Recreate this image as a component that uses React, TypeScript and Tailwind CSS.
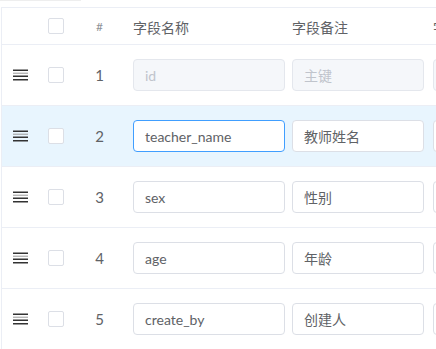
import React from 'react';

interface FieldRow {
  id: number;
  name: string;
  remark: string;
  disabled?: boolean;
  active?: boolean;
}

const ROWS: FieldRow[] = [
  { id: 1, name: 'id', remark: '主键', disabled: true },
  { id: 2, name: 'teacher_name', remark: '教师姓名', active: true },
  { id: 3, name: 'sex', remark: '性别' },
  { id: 4, name: 'age', remark: '年龄' },
  { id: 5, name: 'create_by', remark: '创建人' },
];

const FONT = "font-['Lato','Noto_Sans_CJK_SC',sans-serif]";

function DragHandle() {
  return (
    <svg width="15" height="12" viewBox="0 0 15 12">
      <rect x="0" y="0.5" width="15" height="1.5" fill="#333" />
      <rect x="0" y="3.7" width="15" height="1" fill="#999" />
      <rect x="0" y="6.5" width="15" height="1.5" fill="#333" />
      <rect x="0" y="10" width="15" height="1.5" fill="#333" />
    </svg>
  );
}

function Checkbox() {
  return <span className="block w-4 h-4 rounded-[2px] border border-[#dcdfe6] bg-white" />;
}

function Field({
  value,
  width,
  disabled,
  focused,
}: {
  value: string;
  width: string;
  disabled?: boolean;
  focused?: boolean;
}) {
  return (
    <div
      className={`${width} h-8 rounded-[4px] border flex items-center pl-[11px] text-[14px] overflow-hidden whitespace-nowrap
        ${disabled ? 'bg-[#f5f7fa] border-[#e4e7ed] text-[#c0c4cc]' : 'bg-white text-[#606266]'}
        ${focused ? 'border-[#409eff]' : disabled ? '' : 'border-[#dcdfe6]'}`}
    >
      {value}
    </div>
  );
}

export default function App() {
  return (
    <div className={`w-[436px] h-[349px] overflow-hidden bg-white ${FONT}`}>
      <div className="w-[81px] h-px bg-[#eeeeee]" />
      <div className="mt-[6px] ml-px border-l border-t border-[#ebeef5] w-[560px]">
        <div className="flex items-center h-[37px] border-b border-[#ebeef5] text-[14px] text-[#606266]">
          <div className="w-9 shrink-0" />
          <div className="w-9 shrink-0 flex justify-center">
            <Checkbox />
          </div>
          <div className="w-[51px] shrink-0 text-center text-[12px] text-[#909399] pt-[2px]">#</div>
          <div className="w-[159px] shrink-0 pl-2 pt-[2px]">字段名称</div>
          <div className="w-[141px] shrink-0 pl-2 pt-[2px]">字段备注</div>
          <div className="shrink-0 pl-2 pt-[2px]">字段类型</div>
        </div>

        {ROWS.map((row) => (
          <div
            key={row.id}
            className={`flex items-center h-[61px] border-b border-[#ebeef5] ${
              row.active ? 'bg-[#e8f5fe]' : 'bg-white'
            }`}
          >
            <div className="w-9 shrink-0 flex justify-center">
              <DragHandle />
            </div>
            <div className="w-9 shrink-0 flex justify-center">
              <Checkbox />
            </div>
            <div className="w-[51px] shrink-0 text-center text-[15px] text-[#606266]">{row.id}</div>
            <div className="w-[159px] shrink-0 pl-2">
              <Field value={row.name} width="w-[152px]" disabled={row.disabled} focused={row.active} />
            </div>
            <div className="w-[141px] shrink-0 pl-2">
              <Field value={row.remark} width="w-[132px]" disabled={row.disabled} />
            </div>
            <div className="shrink-0 pl-2">
              <Field value="" width="w-[120px]" disabled={row.disabled} />
            </div>
          </div>
        ))}
      </div>
    </div>
  );
}
